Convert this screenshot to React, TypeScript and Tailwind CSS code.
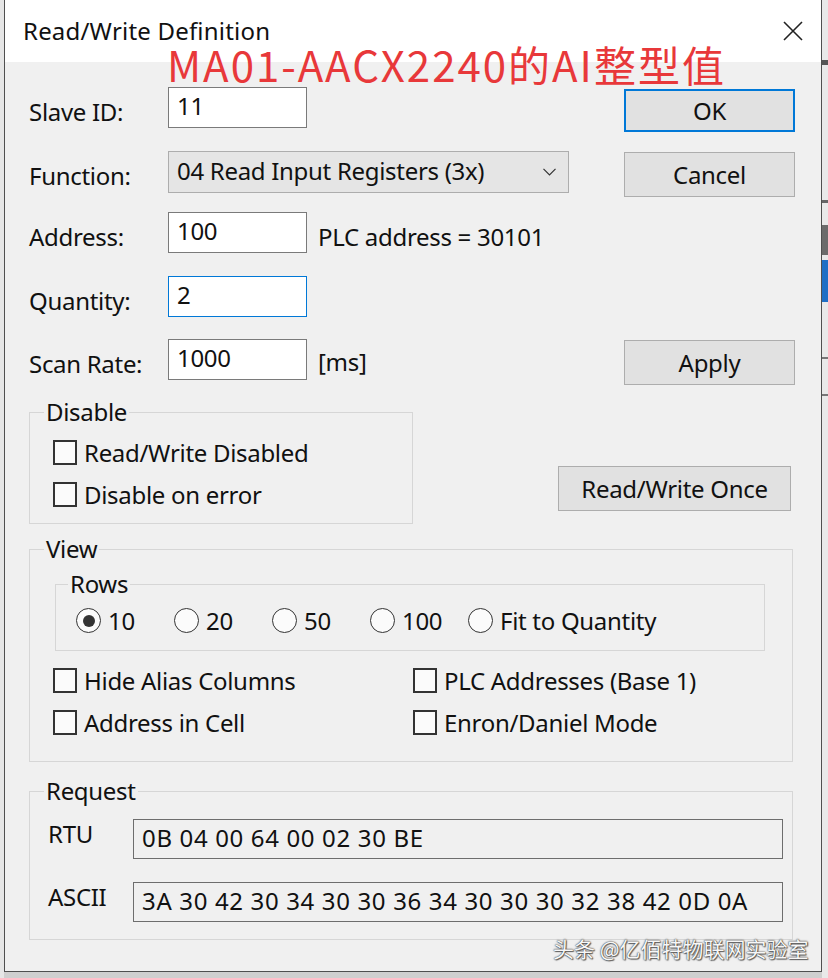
import React from "react";

const T = "text-[24px] leading-[26px] text-[#111] whitespace-nowrap tracking-[-0.3px]";
const H = "text-[24px] leading-[26px] text-[#111] whitespace-nowrap tracking-[0.65px]";

function Input({ value, focus }: { value: string; focus?: boolean }) {
  return (
    <div
      className={`w-[139px] h-[41px] bg-white border ${
        focus ? "border-[#0078d7]" : "border-[#7a7a7a]"
      } pl-[8px] pb-[3px] flex items-center ${T}`}
    >
      {value}
    </div>
  );
}

function Label({ children }: { children: React.ReactNode }) {
  return <div className={`w-[139px] h-[41px] pt-[9px] flex items-center ${T}`}>{children}</div>;
}

function Button({ children, className = "" }: { children: React.ReactNode; className?: string }) {
  return (
    <div
      className={`bg-[#e1e1e1] border border-[#adadad] flex items-center justify-center ${T} ${className}`}
    >
      {children}
    </div>
  );
}

function Checkbox({ label }: { label: string }) {
  return (
    <div className="flex items-center h-[25px]">
      <div className="w-[24px] h-[25px] border-2 border-[#333] bg-[#fbfbfb]" />
      <span className={`ml-[7px] ${T}`}>{label}</span>
    </div>
  );
}

function Radio({ label, checked }: { label: string; checked?: boolean }) {
  return (
    <div className="flex items-center w-[98px] h-[25px]">
      <div className="w-[25px] h-[25px] rounded-full border-[1.5px] border-[#333] bg-[#fbfbfb] flex items-center justify-center shrink-0">
        {checked && <div className="w-[12px] h-[12px] rounded-full bg-[#333]" />}
      </div>
      <span className={`ml-[7px] ${T}`}>{label}</span>
    </div>
  );
}

function Legend({ children, ml = "ml-[14px]" }: { children: React.ReactNode; ml?: string }) {
  return <legend className={`${ml} px-[2px] ${T}`}>{children}</legend>;
}

export default function App() {
  return (
    <div className="w-[828px] h-[978px] bg-[#cfcfcf] flex overflow-hidden font-['Noto_Sans','Open_Sans',sans-serif]">
      <div className="w-[4px] h-full bg-[#e6e6e6]" />
      <div className="relative w-[818px] h-[972px] border-x border-b border-[#4f4f4f] bg-[#f0f0f0] flex flex-col shrink-0">
        {/* title bar */}
        <div className="h-[62px] bg-white flex items-center justify-between pl-[18px] pr-[18px]">
          <span className="text-[24px] leading-[26px] text-[#111] tracking-[0.2px]">Read/Write Definition</span>
          <svg width="20" height="20" viewBox="0 0 20 20">
            <path d="M1 1 L19 19 M19 1 L1 19" stroke="#222" strokeWidth="1.6" fill="none" />
          </svg>
        </div>

        {/* body */}
        <div className="flex flex-col pl-[24px] pr-[26px]">
          <div className="flex h-[45px] mt-[25px]">
            <Label>Slave ID:</Label>
            <Input value="11" />
            <Button className="ml-auto mt-[2px] w-[171px] h-[43px] !border-2 !border-[#0078d7]">OK</Button>
          </div>

          <div className="flex h-[46px] mt-[19px]">
            <Label>Function:</Label>
            <div className={`w-[401px] h-[42px] bg-[#e5e5e5] border border-[#adadad] pl-[8px] pr-[12px] pb-[3px] flex items-center justify-between ${T}`}>
              <span>04 Read Input Registers (3x)</span>
              <svg width="13" height="8" viewBox="0 0 13 8" className="mt-[3px]">
                <path d="M0.5 0.8 L6.5 6.8 L12.5 0.8" stroke="#333" strokeWidth="1.2" fill="none" />
              </svg>
            </div>
            <Button className="ml-auto mt-[1px] w-[171px] h-[45px]">Cancel</Button>
          </div>

          <div className="flex h-[41px] mt-[15px]">
            <Label>Address:</Label>
            <Input value="100" />
            <div className={`ml-[11px] pt-[9px] flex items-center ${T}`}>PLC address = 30101</div>
          </div>

          <div className="flex h-[41px] mt-[23px]">
            <Label>Quantity:</Label>
            <Input value="2" focus />
          </div>

          <div className="flex h-[46px] mt-[22px]">
            <Label>Scan Rate:</Label>
            <Input value="1000" />
            <div className={`ml-[11px] h-[41px] pt-[4px] flex items-center ${T}`}>[ms]</div>
            <Button className="ml-auto mt-[1px] w-[171px] h-[45px]">Apply</Button>
          </div>

          {/* Disable */}
          <div className="flex mt-[14px]">
            <fieldset className="w-[384px] border border-[#d6d6d6]">
              <Legend>Disable</Legend>
              <div className="pl-[23px] pt-[15px] pb-[16px] flex flex-col gap-[17px]">
                <Checkbox label="Read/Write Disabled" />
                <Checkbox label="Disable on error" />
              </div>
            </fieldset>
            <Button className="ml-[145px] mt-[67px] w-[233px] h-[45px] self-start">Read/Write Once</Button>
          </div>

          {/* View */}
          <fieldset className="mt-[12px] w-[764px] border border-[#d6d6d6]">
            <Legend>View</Legend>
            <fieldset className="ml-[25px] mt-[9px] w-[710px] border border-[#d6d6d6]">
              <Legend ml="ml-[12px]">Rows</Legend>
              <div className="pl-[20px] pt-[11px] pb-[17px] flex">
                <Radio label="10" checked />
                <Radio label="20" />
                <Radio label="50" />
                <Radio label="100" />
                <Radio label="Fit to Quantity" />
              </div>
            </fieldset>
            <div className="pl-[23px] pt-[17px] pb-[26px] grid grid-cols-[360px_1fr] gap-y-[17px]">
              <Checkbox label="Hide Alias Columns" />
              <Checkbox label="PLC Addresses (Base 1)" />
              <Checkbox label="Address in Cell" />
              <Checkbox label="Enron/Daniel Mode" />
            </div>
          </fieldset>

          {/* Request */}
          <fieldset className="mt-[16px] w-[764px] border border-[#d6d6d6]">
            <Legend>Request</Legend>
            <div className="pl-[18px] pr-[9px] pt-[15px] pb-[17px] flex flex-col gap-[23px]">
              <div className="flex">
                <div className={`w-[85px] mt-[2px] ${T}`}>RTU</div>
                <div className={`flex-1 h-[40px] border border-[#6d6d6d] pl-[8px] pb-[2px] flex items-center ${H}`}>
                  0B 04 00 64 00 02 30 BE
                </div>
              </div>
              <div className="flex">
                <div className={`w-[85px] mt-[2px] ${T}`}>ASCII</div>
                <div className={`flex-1 h-[40px] border border-[#6d6d6d] pl-[8px] pb-[2px] flex items-center ${H}`}>
                  3A 30 42 30 34 30 30 36 34 30 30 30 32 38 42 0D 0A
                </div>
              </div>
            </div>
          </fieldset>
        </div>

        {/* red annotation */}
        <div className="absolute left-[162px] top-[40px] text-[42px] leading-[48px] tracking-[2px] text-[#e8383a] whitespace-nowrap font-['Noto_Sans_CJK_SC','Noto_Sans',sans-serif]">
          MA01-AACX2240的AI整型值
        </div>

        {/* watermark */}
        <div className="absolute left-[548px] top-[935px] text-[21px] leading-[26px] text-[#f7f7f7] whitespace-nowrap font-['Noto_Sans_CJK_SC',sans-serif] [text-shadow:0_0_1px_#333,0_0_2px_#555,1px_1px_1px_#666]">
          头条 @亿佰特物联网实验室
        </div>
      </div>
      <div className="w-[6px] h-full flex flex-col bg-[#e9e9e9]">
        <div className="h-[60px]" />
        <div className="h-[5px] bg-[#555]" />
        <div className="h-[135px]" />
        <div className="h-[3px] bg-[#666]" />
        <div className="h-[22px]" />
        <div className="h-[30px] bg-[#6b6b6b]" />
        <div className="h-[5px]" />
        <div className="h-[42px] bg-[#1f6fc5]" />
        <div className="h-[55px]" />
        <div className="h-[2px] bg-[#777]" />
        <div className="h-[35px]" />
        <div className="h-[2px] bg-[#777]" />
      </div>
    </div>
  );
}
